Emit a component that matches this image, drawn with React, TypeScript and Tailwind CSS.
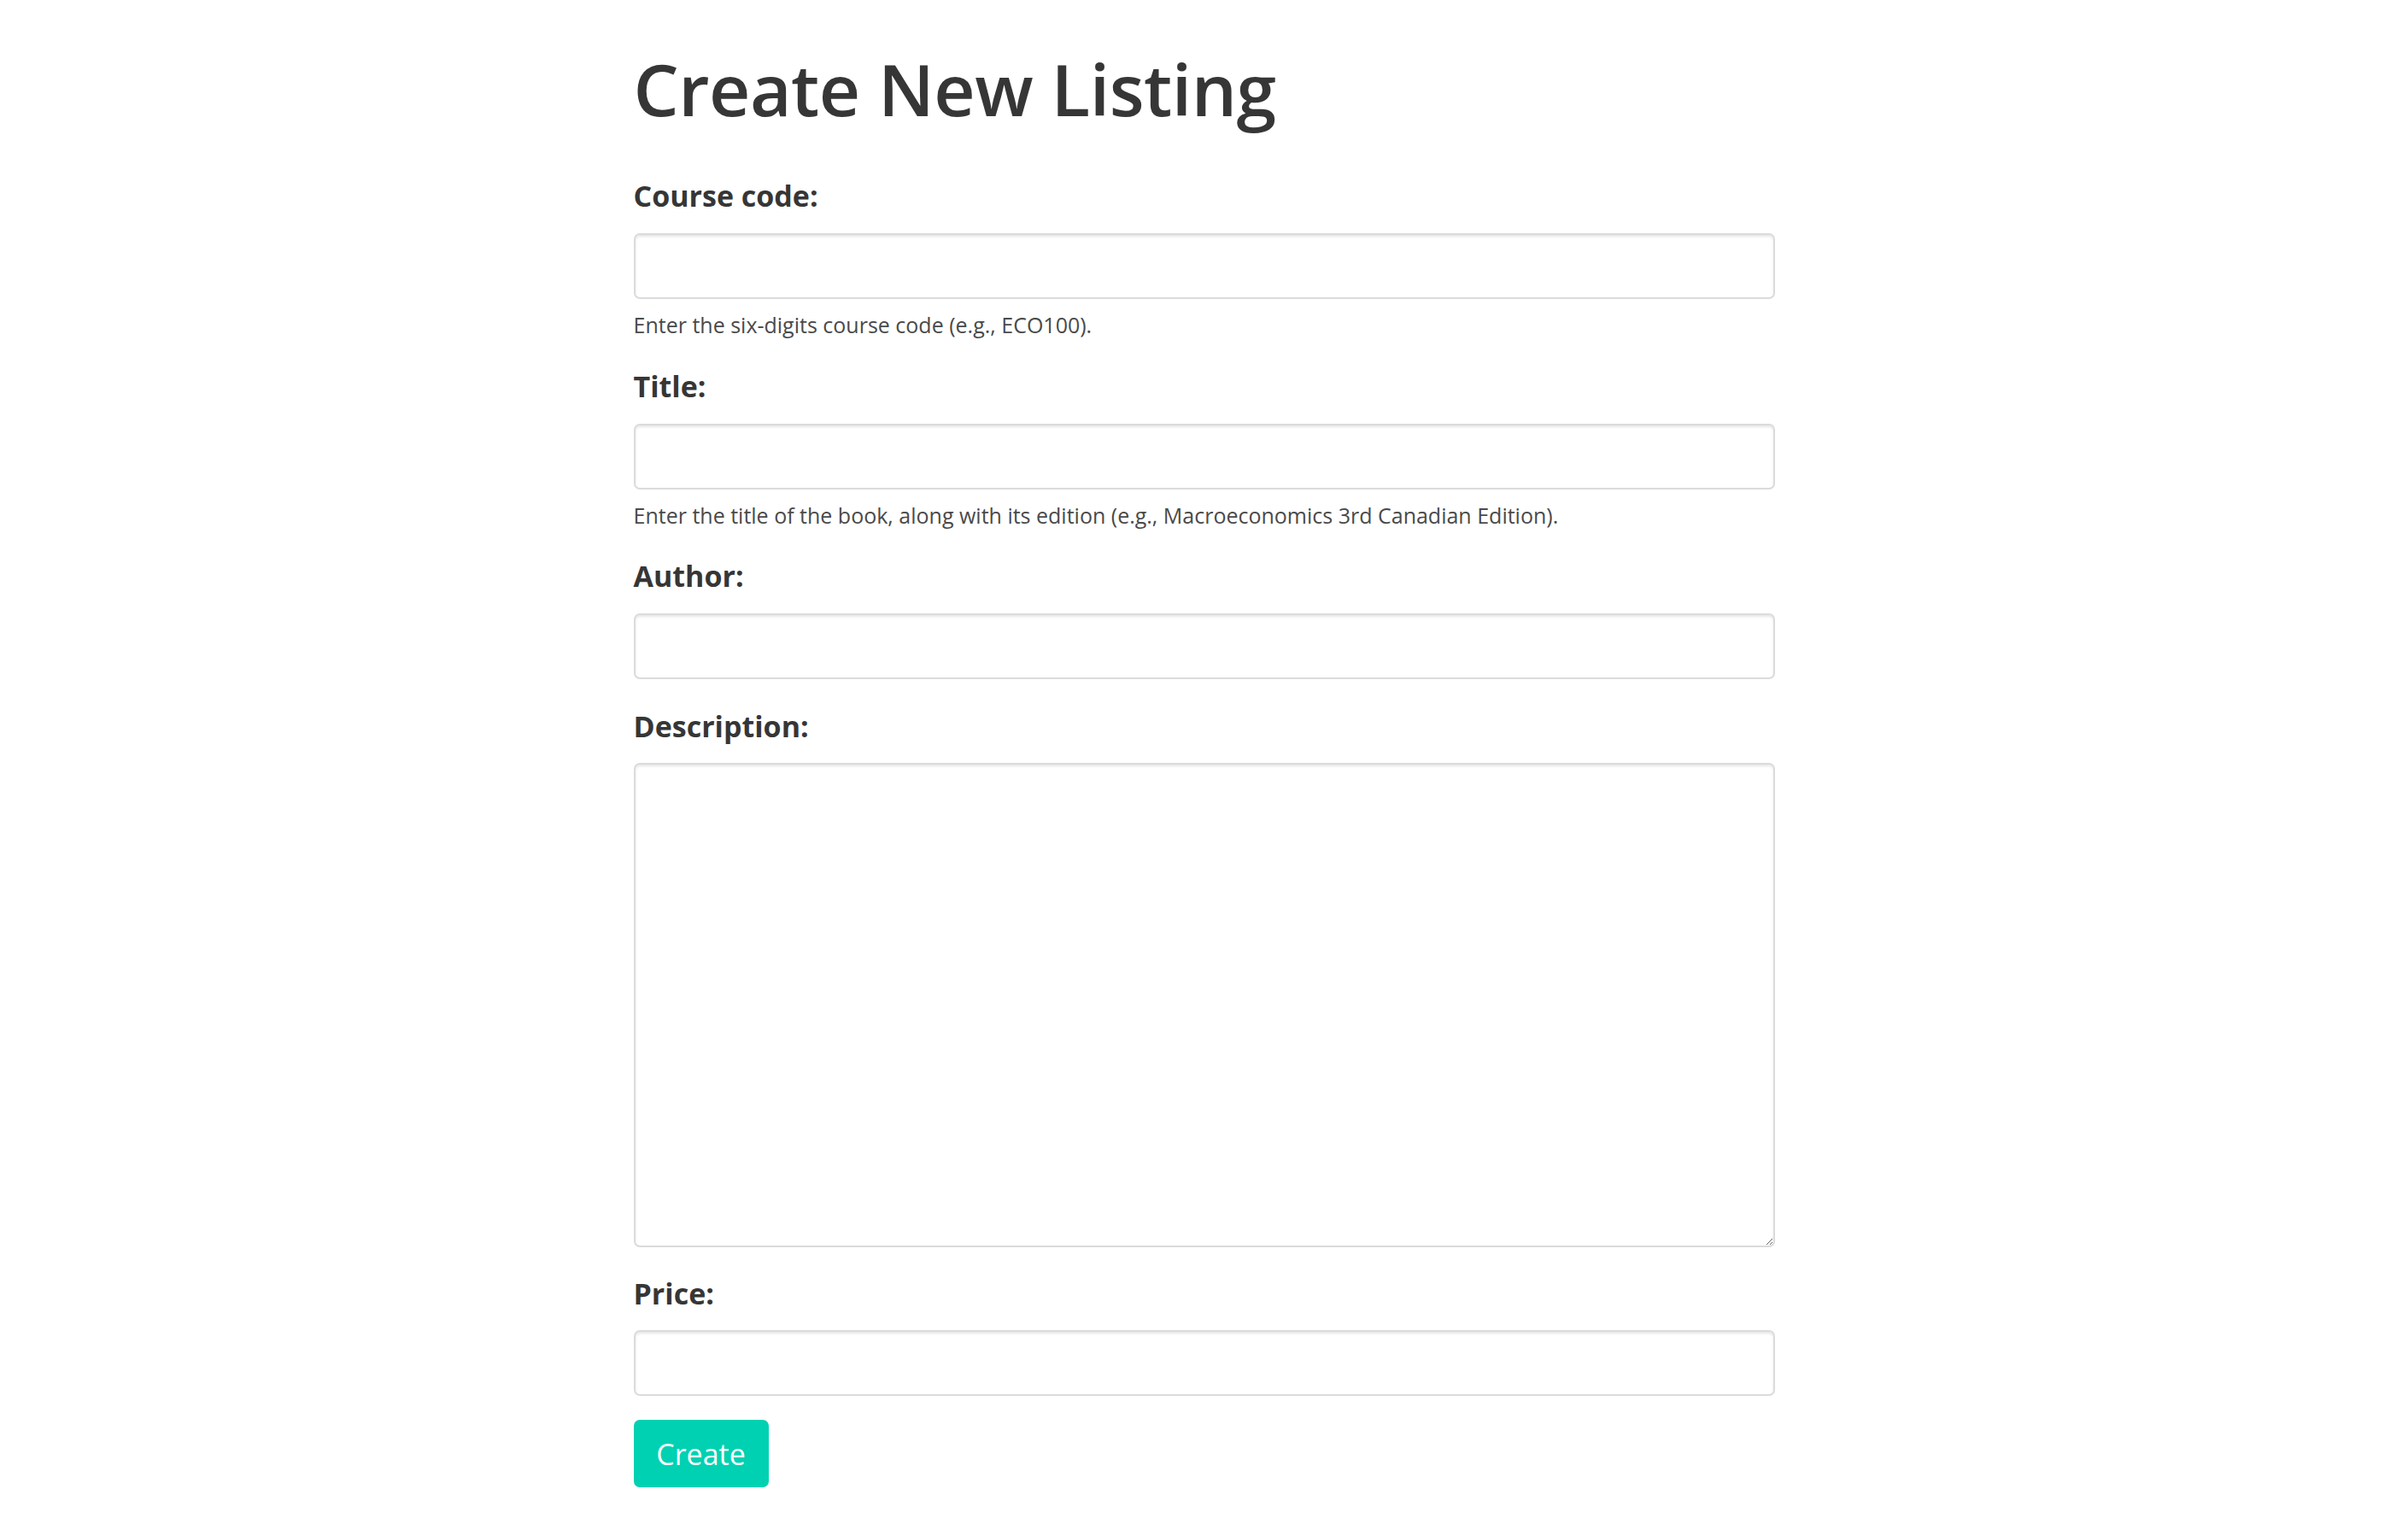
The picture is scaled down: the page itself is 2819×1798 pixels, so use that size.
import React from "react";

function Label({ children, className = "" }: { children: React.ReactNode; className?: string }) {
  return (
    <label className={`block text-[34px] leading-[46px] font-bold text-[#363636] ${className}`}>
      {children}
    </label>
  );
}

const inputCls =
  "block w-full h-[77px] bg-white border-2 border-[#dbdbdb] rounded-[7px] shadow-[inset_0_2px_3px_rgba(10,10,10,0.1)] outline-none px-[20px] text-[34px] text-[#363636]";

export default function App() {
  return (
    <div
      className="min-h-screen bg-white"
      style={{ fontFamily: '"Open Sans", "Noto Sans", sans-serif' }}
    >
      <div className="mx-auto w-[1336px] pt-[52px] pb-[48px]">
        <h1 className="text-[84px] leading-[104px] font-semibold text-[#363636] tracking-[-0.5px]">
          Create New Listing
        </h1>
        <form className="mt-[50px]" onSubmit={(e) => e.preventDefault()}>
          <div>
            <Label className="mb-[21px]">Course code:</Label>
            <input type="text" className={inputCls} />
            <p className="mt-[12px] text-[25px] leading-[36px] text-[#4a4a4a]">
              Enter the six-digits course code (e.g., ECO100).
            </p>
          </div>
          <div className="mt-[31px]">
            <Label className="mb-[21px]">Title:</Label>
            <input type="text" className={inputCls} />
            <p className="mt-[12px] text-[25px] leading-[36px] text-[#4a4a4a]">
              Enter the title of the book, along with its edition (e.g., Macroeconomics 3rd Canadian Edition).
            </p>
          </div>
          <div className="mt-[30px]">
            <Label className="mb-[21px]">Author:</Label>
            <input type="text" className={inputCls} />
          </div>
          <div className="mt-[32px]">
            <Label className="mb-[20px]">Description:</Label>
            <textarea
              className="block w-full h-[567px] bg-white border-2 border-[#dbdbdb] rounded-[7px] shadow-[inset_0_2px_3px_rgba(10,10,10,0.1)] outline-none px-[20px] py-[14px] text-[34px] text-[#363636] resize-y"
            />
          </div>
          <div className="mt-[31px]">
            <Label className="mb-[20px]">Price:</Label>
            <input type="text" className={inputCls} />
          </div>
          <button
            type="submit"
            className="mt-[28px] h-[79px] w-[158px] rounded-[7px] bg-[#00d1b2] text-white text-[34px] leading-none flex items-center justify-center"
          >
            Create
          </button>
        </form>
      </div>
    </div>
  );
}
